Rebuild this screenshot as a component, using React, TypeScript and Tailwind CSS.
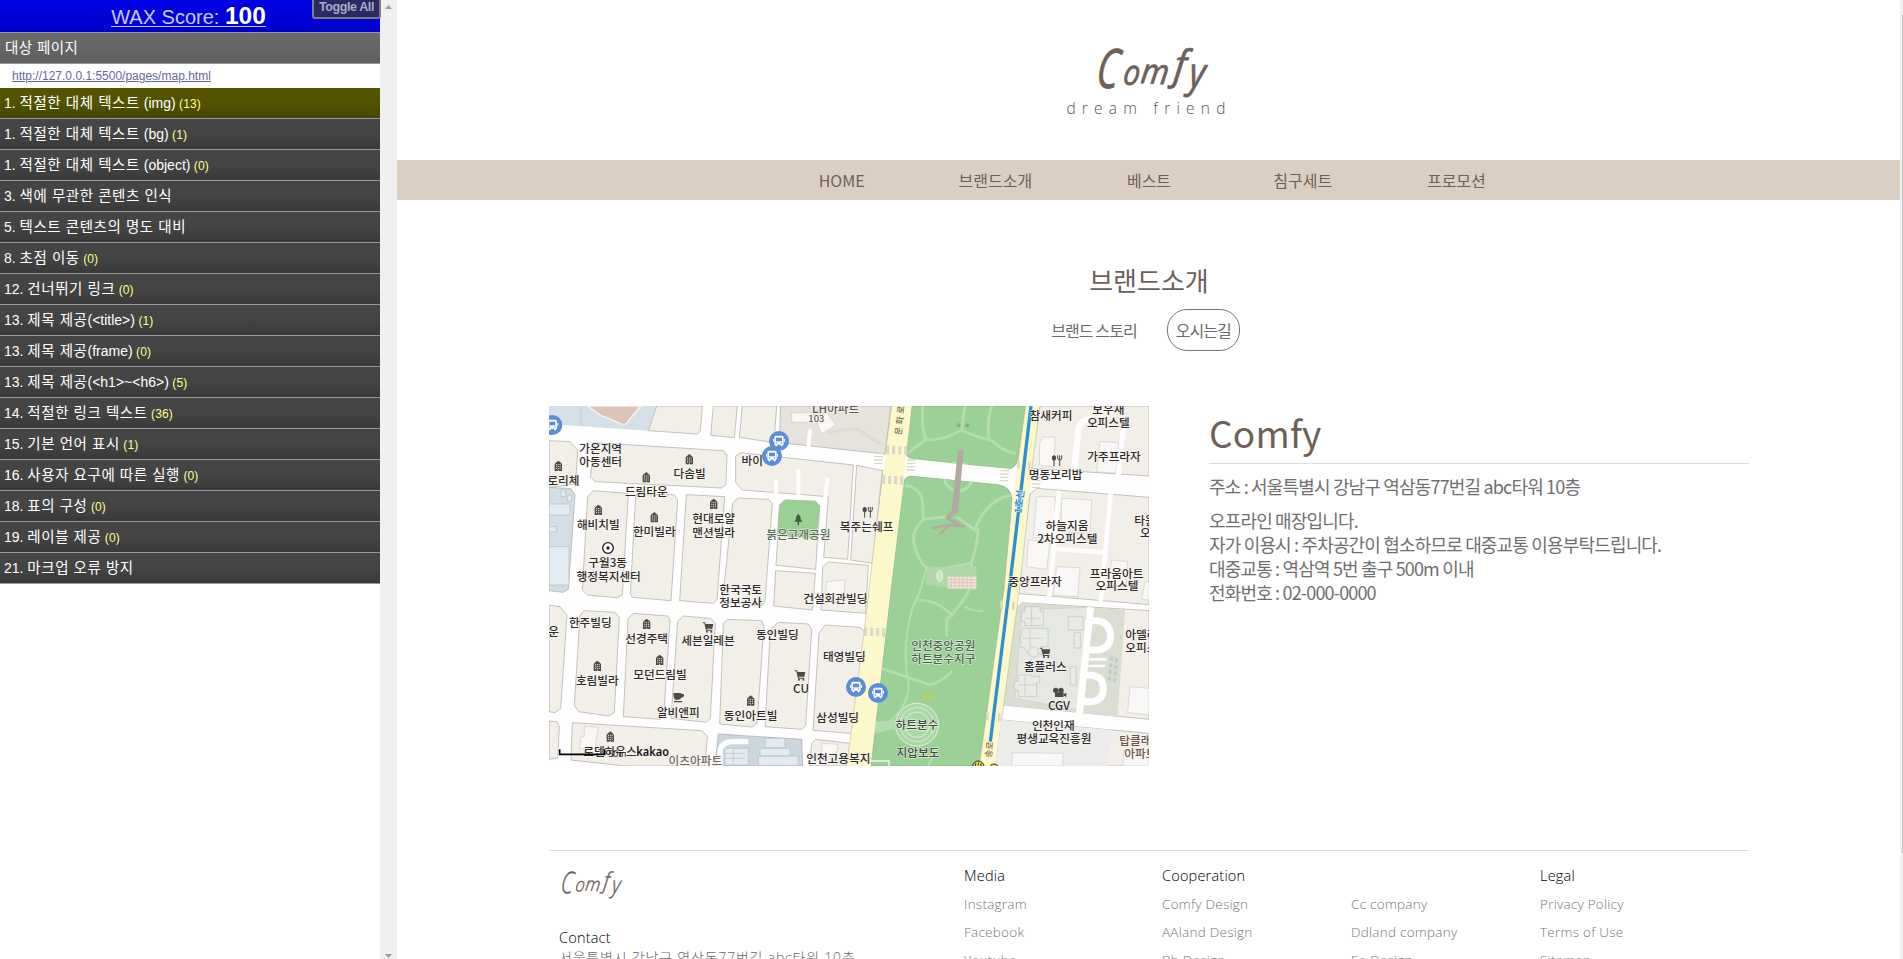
import type { ReactNode } from "react";

type Check = { no: string; ko: string; en?: string; count?: number; active?: boolean };

const checks: Check[] = [
  { no: "1.", ko: "적절한 대체 텍스트", en: " (img)", count: 13, active: true },
  { no: "1.", ko: "적절한 대체 텍스트", en: " (bg)", count: 1 },
  { no: "1.", ko: "적절한 대체 텍스트", en: " (object)", count: 0 },
  { no: "3.", ko: "색에 무관한 콘텐츠 인식" },
  { no: "5.", ko: "텍스트 콘텐츠의 명도 대비" },
  { no: "8.", ko: "초점 이동", count: 0 },
  { no: "12.", ko: "건너뛰기 링크", count: 0 },
  { no: "13.", ko: "제목 제공", en: "(<title>)", count: 1 },
  { no: "13.", ko: "제목 제공", en: "(frame)", count: 0 },
  { no: "13.", ko: "제목 제공", en: "(<h1>~<h6>)", count: 5 },
  { no: "14.", ko: "적절한 링크 텍스트", count: 36 },
  { no: "15.", ko: "기본 언어 표시", count: 1 },
  { no: "16.", ko: "사용자 요구에 따른 실행", count: 0 },
  { no: "18.", ko: "표의 구성", count: 0 },
  { no: "19.", ko: "레이블 제공", count: 0 },
  { no: "21.", ko: "마크업 오류 방지" },
];

function Sidebar() {
  return (
    <aside className="flex h-full w-[397px] shrink-0 bg-white font-['Liberation_Sans','Noto_Sans_CJK_KR',sans-serif]">
      <div className="w-[380px]">
        <div className="relative flex h-[33px] items-center justify-center border-b border-[#9a9a9a] bg-gradient-to-b from-[#0000e6] to-[#0000cc]">
          <a className="flex items-baseline pr-[3px] text-[20px] leading-none text-[#c9c9ff] underline decoration-1 underline-offset-2">
            <span className="whitespace-pre">WAX Score: </span>
            <b className="text-[24.5px] text-white">100</b>
          </a>
          <button className="absolute right-[-1px] top-[-5px] flex h-6 w-[69px] items-center justify-center rounded-[3px] border-2 border-[#7d7d86] bg-[#2a2a62] text-[12.5px] font-bold tracking-[-0.4px] text-[#a9a9c6]">
            Toggle All
          </button>
        </div>
        <div className="flex h-[31px] items-center border-b border-[#999] bg-gradient-to-b from-[#6a6a6a] to-[#606060] pl-[5px] pt-px text-[14.5px] tracking-[0.4px] text-white">
          대상 페이지
        </div>
        <div className="flex h-6 items-center pl-3 text-[12px] text-[#66669c] underline">
          <a>http://127.0.0.1:5500/pages/map.html</a>
        </div>
        {checks.map((c, i) => (
          <div
            key={i}
            className={`flex h-[31px] items-center whitespace-pre border-b border-[#999] pl-1 pt-px text-[14px] text-white ${
              c.active
                ? "bg-gradient-to-b from-[#555500] via-[#535300] to-[#454500]"
                : "bg-gradient-to-b from-[#454545] via-[#444444] to-[#393939]"
            }`}
          >
            <span>{c.no} </span>
            <span className="text-[14.5px] tracking-[0.55px]">{c.ko}</span>
            {c.en && <span>{c.en}</span>}
            {c.count !== undefined && <span className="pt-px text-[12px] tracking-[0.1px] text-[#ffff88]"> ({c.count})</span>}
          </div>
        ))}
      </div>
      <div className="flex w-[17px] flex-col items-center justify-between bg-[#f0f0f0] pb-px pt-[5px]">
        <svg width="7" height="4" viewBox="0 0 7 4"><path d="M0 4 3.5 0 7 4z" fill="#9b9b9b" /></svg>
        <svg width="7" height="4" viewBox="0 0 7 4"><path d="M0 0 3.5 4 7 0z" fill="#9b9b9b" /></svg>
      </div>
    </aside>
  );
}

/* ---------- Map ---------- */

const blocks = [
  "335,18 472,18 466,92 458,102 310,92",
  "505,18 577,18 568,113 497,106",
  "592,18 695,18 687,128 583,112",
  "12,122 75,125 98,150 92,252 12,262",
  "150,128 535,152 546,166 543,254 530,264 150,245 136,230",
  "572,168 588,158 925,195 908,478 836,472 850,290 592,270 572,248",
  "145,272 250,280 232,585 215,593 128,585 112,570 128,290",
  "272,284 388,284 398,300 378,602 262,592 256,580",
  "424,284 539,290 516,600 505,610 404,602",
  "578,294 670,298 682,310 660,603 650,617 532,606 563,310",
  "704,315 718,300 812,304 824,318 812,508 693,496",
  "692,512 811,520 803,630 686,618",
  "850,486 970,496 962,640 828,630 833,500",
  "935,196 1013,212 985,490 917,480",
  "12,615 45,620 66,645 47,925 30,938 12,935",
  "118,632 210,637 223,652 208,938 190,948 100,935 88,915 105,645",
  "265,640 368,648 375,662 356,948 345,958 235,950 249,655",
  "415,648 497,655 511,670 496,955 484,967 378,955 398,664",
  "548,658 650,662 657,678 636,970 620,981 524,972 535,670",
  "700,667 790,672 800,688 782,978 770,988 660,980 676,688",
  "840,675 945,682 960,695 925,1001 804,991 822,700",
  "12,963 35,965 43,980 38,1075 12,1078",
  "82,968 470,992 487,1008 480,1098 240,1098 78,1080",
  "812,1018 915,1030 905,1098 794,1098 800,1030",
  "1485,18 1812,18 1812,228 1460,205",
  "1455,282 1475,265 1812,292 1812,614 1415,580",
  "1412,625 1432,608 1812,632 1812,958 1377,915",
  "1370,960 1812,1000 1812,1098 1350,1098",
];

const buildings = [
  "740,38 805,38 805,50 845,38 872,75 830,102 815,68 740,66",
  "1495,110 1530,112 1528,200 1483,195 1484,130",
  "1665,125 1720,128 1713,220 1655,215",
  "1475,290 1530,290 1530,415 1465,412",
  "1550,295 1640,300 1635,400 1548,395",
  "1450,420 1515,425 1505,508 1445,500",
  "1535,500 1605,503 1598,590 1525,585",
  "1700,480 1748,485 1742,560 1690,555",
  "1800,545 1812,545 1812,600 1790,598",
  "1755,860 1812,865 1812,945 1748,938",
  "1402,1058 1555,1060 1553,1098 1400,1098",
  "1780,1055 1812,1058 1812,1098 1735,1098 1735,1052",
  "118,978 160,982 150,1045 103,1045 108,1010 118,1010",
  "832,1030 880,1033 872,1070 828,1068",
  "845,545 900,540 895,610 840,605",
];

type Label = [string, number, number, string?];

const labels: Label[] = [
  ["가온지역", 167, 160], ["아동센터", 167, 198],
  ["다솜빌", 434, 233], ["드림타운", 304, 288], ["로리체", 55, 255],
  ["해비치빌", 160, 386], ["한미빌라", 328, 408], ["현대로얄", 506, 370], ["맨션빌라", 506, 411],
  ["구월3동", 188, 500], ["행정복지센터", 191, 542],
  ["붉은고개공원", 760, 416, "#566a56"], ["바이", 622, 194],
  ["한국국토", 587, 581], ["정보공사", 587, 620], ["건설회관빌딩", 871, 609],
  ["운", 26, 708], ["한주빌딩", 136, 680], ["선경주택", 305, 729], ["세븐일레븐", 489, 735],
  ["동인빌딩", 697, 717], ["태영빌딩", 898, 783], ["호림빌라", 157, 855], ["모던드림빌", 345, 837],
  ["CU", 768, 879], ["알비앤피", 400, 951], ["동인아트빌", 617, 960], ["삼성빌딩", 878, 965],
  ["로덴하우스", 195, 1068], ["이츠아파트", 451, 1094, "#6e6862"], ["인천고용복지", 880, 1088],
  ["복주는쉐프", 965, 392],
  ["참새커피", 1518, 60], ["보우새", 1690, 42], ["오피스텔", 1690, 82], ["가주프라자", 1707, 184],
  ["명동보리밥", 1532, 238], ["하늘지움", 1566, 391], ["2차오피스텔", 1567, 430],
  ["중앙프라자", 1470, 557], ["프라움아트", 1715, 533], ["오피스텔", 1716, 570],
  ["인천중앙공원", 1195, 750, "#46644a"], ["하트분수지구", 1195, 790, "#46644a"],
  ["하트분수", 1116, 987, "#3d4a3d"], ["지압보도", 1119, 1072, "#3d4a3d"],
  ["홈플러스", 1501, 812], ["CGV", 1542, 930],
  ["인천인재", 1525, 989], ["평생교육진흥원", 1527, 1028],
];

const edgeLabels: Label[] = [
  ["타원", 1768, 374], ["오", 1785, 410], ["아델라", 1741, 716], ["오피스", 1741, 756],
  ["탑클래", 1723, 1034, "#6a5346"], ["아파트", 1738, 1074, "#6a5346"],
];

const houses: [number, number][] = [
  [40, 198], [433, 178], [304, 232], [160, 330], [328, 352], [506, 312],
  [305, 672], [344, 780], [157, 798], [617, 902], [196, 1010],
];

function House({ x, y }: { x: number; y: number }) {
  return (
    <g transform={`translate(${x - 12} ${y - 16})`}>
      <path d="M1 31V10L6 5 12 0 18 5 23 10V31Z" fill="#4d4945" />
      <path d="M5 12h3M10.500 12h3M16 12h3M5 18h3M10.500 18h3M16 18h3M5 24h3M10.500 24h3M16 24h3M10.500 30h3" stroke="#f2efe9" strokeWidth="3" />
    </g>
  );
}

function Bus({ x, y }: { x: number; y: number }) {
  return (
    <g transform={`translate(${x} ${y})`}>
      <circle r="30" fill="#5a8ddb" />
      <path d="M-10-16H10Q14-16 14-11V11H-14V-11Q-14-16-10-16ZM-11 10h6v6h-6ZM5 10h6v6h-6ZM-18-6h3v8h-3ZM15-6h3v8h-3Z" fill="#fff" />
      <path d="M-9-10H9V1H-9Z" fill="#5a8ddb" />
      <circle cx="-8" cy="6" r="2" fill="#5a8ddb" />
      <circle cx="8" cy="6" r="2" fill="#5a8ddb" />
    </g>
  );
}

function Cart({ x, y }: { x: number; y: number }) {
  return (
    <g transform={`translate(${x - 16} ${y - 15})`} fill="#4d4945">
      <path d="M0 0h7l2 5h23l-3 14H12l1 3h16v3H10L5 3H0Z" />
      <circle cx="13" cy="28" r="3" />
      <circle cx="26" cy="28" r="3" />
    </g>
  );
}

function Fork({ x, y }: { x: number; y: number }) {
  return (
    <g transform={`translate(${x - 16} ${y - 16})`} fill="none" stroke="#4d4945" strokeWidth="3">
      <ellipse cx="7" cy="8" rx="5" ry="7" fill="#4d4945" />
      <path d="M7 14V32M24 14V32M18 0V8Q18 14 24 14T30 8V0M24 0V14" />
    </g>
  );
}

function Crosswalk({ x, y, vertical = false }: { x: number; y: number; vertical?: boolean }) {
  return (
    <path
      d={vertical ? "M0 0V25M18 1V26M36 2V27M54 3V28" : "M0 0h25M-1 10h25M-2 20h25M-3 30h25"}
      transform={`translate(${x} ${y})`}
      stroke="#d9d6ca"
      strokeWidth={vertical ? 9 : 4}
      fill="none"
    />
  );
}

function MapText({ items }: { items: Label[] }) {
  return (
    <>
      {items.map(([text, x, y, fill], i) => (
        <text key={i} x={x} y={y} fill={fill ?? "#2e2b28"}>{text}</text>
      ))}
    </>
  );
}

function BrandMap() {
  return (
    <svg className="block h-[360px] w-[600px]" viewBox="12 18 1800 1080">
      <rect x="12" y="18" width="1800" height="1080" fill="#fefefe" />
      <polygon points="12,18 335,18 310,92 12,72" fill="#d5dfe7" />
      <path d="M108 18V78" stroke="#b9c4cc" strokeWidth="2" />
      <path d="M128 18 165 45 234 74 243 72 287 18Z" fill="#dcc3b5" stroke="#f7efe9" strokeWidth="5" />
      <g fill="#f2efe9" stroke="#a9a6a2" strokeWidth="2" strokeLinejoin="round">
        {blocks.map((p) => <polygon key={p} points={p} />)}
        <polygon points="706,18 1038,18 1020,162 704,128" fill="#e6e3dd" />
        <polygon points="12,262 78,266 90,285 70,568 55,577 12,572" fill="#d3dde4" />
        <polygon points="520,1002 770,1018 773,1098 510,1098" fill="#ccd6dd" />
        <polygon points="1412,625 1432,608 1740,630 1718,950 1377,915" fill="#d9ddd2" stroke="none" />
        <polygon points="1370,960 1700,990 1690,1098 1350,1098" fill="#ececea" stroke="none" />
      </g>
      <g fill="#e2ebf1" stroke="#b3bec6" strokeWidth="2">
        <path d="M12 312H75V345H12ZM12 380H34V396H12ZM12 440H72V555H12ZM48 270h14v20H48ZM68 286h12v18H68Z" />
        <path d="M540 1045h70v50h-70ZM660 1015h60v28h-60ZM645 1045h90v23h-90ZM640 1068h120v28H640ZM540 1060h60M540 1075h60M565 1045v50" />
      </g>
      <path d="M610 1025H560Q525 1028 525 1060V1098" fill="none" stroke="#fff" strokeWidth="16" />
      <polygon points="722,300 812,304 824,318 814,414 697,407 704,315" fill="#9bd094" stroke="#a3bfa0" strokeWidth="2" />
      <g fill="#f9f8f6" stroke="#cfccc7" strokeWidth="2">
        {buildings.map((p) => <polygon key={p} points={p} />)}
      </g>
      <path d="M850 100Q890 85 940 88L1005 130" stroke="#dedbd5" strokeWidth="10" fill="none" />
      <g stroke="#fefefe" fill="none" strokeWidth="12">
        <path d="M795 88 790 140M693 240V290M760 208V290M847 234 840 300" />
        <path d="M1640 58Q1605 58 1600 90L1587 212" strokeWidth="19" />
        <path d="M1738 60 1720 225" strokeWidth="15" />
        <path d="M1542 272 1513 590M1697 280 1667 605M1530 447 1680 457" strokeWidth="14" />
      </g>

      {/* park */}
      <g fill="#9bd096" stroke="#8aa888" strokeWidth="2">
        <path d="M1100 18H1442L1420 170Q1415 208 1385 207L1100 175Q1082 173 1084 155Z" />
        <path d="M1076 248Q1080 226 1105 228L1360 254Q1405 262 1401 310L1377 570 1303 1098H977L1037 570Z" />
      </g>
      <g fill="none" stroke="#b4dcae" strokeWidth="9">
        <path d="M1133 18Q1130 90 1142 118L1088 160M1142 118Q1190 125 1250 90L1260 18M1250 90Q1290 110 1340 122 1370 150 1412 162M1340 18Q1325 60 1332 120" />
        <path d="M1080 255Q1125 265 1132 300L1135 358Q1105 385 1105 420 1115 480 1150 510M1135 358 1205 350M1235 350 1290 390Q1320 300 1400 285M1300 385Q1295 450 1278 490L1145 515M1280 490V550Q1270 590 1205 660L1205 710M1222 812Q1200 840 1155 855L1010 805" />
        <path d="M1145 500Q1130 570 1100 630 1070 750 1090 850 1095 900 1050 950L1010 985M1120 600Q1180 600 1225 650M1260 620Q1280 635 1315 632M1150 1098 1175 1040" strokeWidth="7" />
      </g>
      <circle cx="1240" cy="230" r="42" fill="none" stroke="#b4dcae" strokeWidth="10" />
      <path d="M1078 201 1405 232" stroke="#fefefe" strokeWidth="48" />
      <path d="M1246 150 1232 335 1208 355 1230 368M1162 385 1210 375 1260 378M1185 402 1215 375 1250 378 1205 352 1220 335" stroke="#b5a8a3" strokeWidth="7" fill="none" />
      <path d="M1239 150h17l-17 190h-20Z" fill="#b5a8a3" />
      <path d="M1150 500 1295 500 1293 570 1140 555Z" fill="#b0d7a8" />
      <rect x="1208" y="530" width="86" height="36" fill="#eee4dc" />
      <path d="M1208 539h86M1208 548h86M1208 557h86M1218 530v36M1230 530v36M1242 530v36M1254 530v36M1266 530v36M1278 530v36" stroke="#dcb5af" strokeWidth="2" />
      <ellipse cx="1184" cy="528" rx="9" ry="17" fill="#cce7c3" stroke="#f0f7ec" strokeWidth="2" />
      <path d="M1128 888Q1140 865 1155 872L1177 890 1160 905 1130 905Z" fill="#a9d27c" />
      <circle cx="1116" cy="974" r="67" fill="#acd8a7" />
      <g fill="none" stroke="#dceeda" strokeWidth="3">
        <circle cx="1116" cy="974" r="64" />
        <circle cx="1116" cy="974" r="51" />
        <circle cx="1116" cy="974" r="38" />
      </g>
      <path d="M990 965 1050 960 1055 985 990 1000Z" fill="#b4dcae" />
      <circle cx="1241" cy="76" r="6" fill="#78b378" />
      <circle cx="1267" cy="76" r="6" fill="#78b378" />
      <path d="M977 1083h55v15" stroke="#dfe9db" strokeWidth="6" fill="none" />

      {/* main roads */}
      <polygon points="1040,18 1100,18 1084,160 1076,250 1037,570 977,1098 905,1098 958,690 972,570 1012,250" fill="#fdf8c9" />
      <path d="M1040 18 1020 165M1012 212 972 570 958 690 905 1098" stroke="#c5c0a0" strokeWidth="2" fill="none" />
      <polygon points="1442,18 1485,18 1455,270 1423,570 1350,1098 1303,1098 1377,570 1405,280" fill="#fdf8c9" />
      <path d="M1485 18 1460 210M1455 280 1423 570 1370 960M1442 18 1420 180M1401 290 1377 570 1303 1098" stroke="#c5c0a0" strokeWidth="2" fill="none" />
      <path d="M1458 18 1395 550 1336 1025" stroke="#2f8fd3" strokeWidth="10" fill="none" />
      <Crosswalk x={1028} y={136} vertical />
      <Crosswalk x={1016} y={226} vertical />
      <Crosswalk x={962} y={682} vertical />
      <Crosswalk x={990} y={160} />
      <Crosswalk x={1087} y={180} />
      <Crosswalk x={1367} y={212} />
      <Crosswalk x={1463} y={232} />
      <path d="M1420 180v25M1453 185v25M1370 602v25M1405 605v25M1327 935v25M1363 940v25" stroke="#dedac0" strokeWidth="8" />

      {/* department store and parking loops */}
      <polygon points="1430,630 1628,622 1600,930 1410,895" fill="#e5e8e3" stroke="#cacfc5" strokeWidth="2" />
      <g fill="#e9ebe7" stroke="#bfc3bc" strokeWidth="2">
        <path d="M1440 620h45v15h10v42h-55v-12h-10v-30h10ZM1433 685h76v55h-20v22h-40l-12-20h-10v-30ZM1420 825h40v5h24v18h-9v42h-55v-20h-12v-25h12ZM1570 650h44v40h-44ZM1588 698h18v46h-18ZM1576 800h18v55h-18Z" />
        <path d="M1460 620v55M1440 655h45M1455 690v55M1433 715h60M1440 830v55M1420 855h54" fill="none" />
        <circle cx="1466" cy="756" r="15" />
      </g>
      <g fill="none" stroke="#fefefe" strokeWidth="21">
        <path d="M1637 622 1602 955" />
        <path d="M1632 662H1655Q1695 665 1697 710 1695 745 1660 750H1625" />
        <path d="M1615 826H1640Q1675 830 1675 865 1675 902 1640 905H1608" />
        <path d="M1627 662V750M1612 826V905" strokeWidth="14" />
        <path d="M1630 778H1685M1630 798H1680" strokeWidth="8" />
      </g>
      <path d="M1700 770 1692 850M1715 775 1708 850" stroke="#c6cbc7" strokeWidth="10" strokeDasharray="12 8" />

      {houses.map(([x, y]) => <House key={`${x}-${y}`} x={x} y={y} />)}
      <Cart x={489} y={682} />
      <Cart x={765} y={826} />
      <Cart x={1500} y={758} />
      <Fork x={968} y={337} />
      <Fork x={1536} y={182} />
      <path d="M385 879h24v3h7q4 10-7 11-4 6-9 6h-9q-6-4-6-20ZM387 903h24v4h-24Z" fill="#4d4945" />
      <path d="M760 341 769 355h-4l7 10h-10v11h-4v-11h-10l7-10h-4Z" fill="#3c5a3c" />
      <circle cx="189" cy="444" r="16" fill="#fff" stroke="#222" strokeWidth="4" />
      <circle cx="189" cy="444" r="5" fill="#222" />
      <g fill="#4d4945">
        <circle cx="1532" cy="871" r="8" /><circle cx="1548" cy="871" r="8" />
        <path d="M1530 877h26v14h-26ZM1557 882l7-4v13l-7-4Z" />
      </g>

      <g
        className="font-['Noto_Sans_CJK_KR',sans-serif] font-medium"
        fontSize="35"
        textAnchor="middle"
        stroke="#fbfaf7"
        strokeOpacity="0.7"
        strokeWidth="4"
        strokeLinejoin="round"
        paintOrder="stroke"
      >
        <MapText items={labels} />
        <g textAnchor="start"><MapText items={edgeLabels} /></g>
        <text x="872" y="38" fill="#5c5650">LH아파트</text>
        <text x="814" y="65" fontSize="28" fill="#5c5650">103</text>
        <text transform="translate(1074 58) rotate(-84)" fontSize="26" fill="#6e6a55" stroke="none" letterSpacing="8">문화로</text>
        <text transform="translate(1433 306) rotate(-83)" fontSize="29" fontWeight="700" fill="#2f8fd3">1호선</text>
        <text transform="translate(1342 1050) rotate(-83)" fontSize="26" fill="#77735c" stroke="none">송로</text>
      </g>
      <Bus x={22} y={75} />
      <Bus x={681} y={168} />
      <Bus x={702} y={123} />
      <Bus x={933} y={861} />
      <Bus x={999} y={879} />
      <g stroke="#222" strokeWidth="3">
        <circle cx="1300" cy="1100" r="17" fill="#f6df54" />
        <circle cx="1347" cy="1106" r="14" fill="#f6df54" />
      </g>
      <path d="M1292 1090v8M1300 1088v8M1308 1090v8" stroke="#222" strokeWidth="3" />
      <path d="M44 1048V1063H179V1048" fill="none" stroke="#000" strokeWidth="5" />
      <text x="190" y="1072" fontSize="26" className="font-['Noto_Sans']" fill="#222">50m</text>
      <text x="274" y="1069" fontSize="35" className="font-['Noto_Sans'] font-semibold" fill="#111" textLength="98" lengthAdjust="spacingAndGlyphs">kakao</text>
    </svg>
  );
}

/* ---------- Site ---------- */

type Letter = { ch: string; size: number; sx: number; at: string };

const wordmark: Letter[] = [
  { ch: "C", size: 55, sx: 0.68, at: "translate(-2 40) rotate(4)" },
  { ch: "o", size: 36, sx: 0.8, at: "translate(25 37) rotate(6)" },
  { ch: "m", size: 35, sx: 0.9, at: "translate(43 36) rotate(3)" },
  { ch: "f", size: 41, sx: 0.92, at: "translate(76 32) rotate(2)" },
  { ch: "y", size: 42, sx: 0.82, at: "translate(91 40) rotate(2)" },
];

function Wordmark({ className }: { className: string }) {
  return (
    <svg className={className} viewBox="0 0 112 54" overflow="visible" role="img" aria-label="Comfy">
      <g className="font-['Open_Sans',cursive] italic" fill="#6e6059" stroke="#6e6059" strokeWidth="0.8" strokeLinejoin="round">
        {wordmark.map((l) => (
          <text key={l.ch} fontSize={l.size} transform={`${l.at} scale(${l.sx} 1) skewX(-5)`}>{l.ch}</text>
        ))}
      </g>
    </svg>
  );
}

const navItems = ["HOME", "브랜드소개", "베스트", "침구세트", "프로모션"];

function FooterColumn({ title, items, width }: { title: string; items: string[]; width: string }) {
  return (
    <div className={`shrink-0 ${width}`}>
      <h3 className="h-[25px] pt-px text-[14.5px] leading-[20px] tracking-[0.2px] text-black">{title}</h3>
      <ul className="text-[13.5px] leading-[28px] tracking-[0.25px] text-[#767676]">
        {items.map((t) => <li key={t}>{t}</li>)}
      </ul>
    </div>
  );
}

function Line({ children }: { children: ReactNode }) {
  return <p className="leading-6">{children}</p>;
}

export default function App() {
  return (
    <div className="flex h-[959px] w-[1903px] overflow-hidden bg-white">
      <Sidebar />
      <main className="flex h-full w-[1503px] shrink-0 flex-col items-center overflow-hidden pl-px font-['Noto_Sans_CJK_KR',sans-serif]">
        <header className="flex h-[160px] w-full shrink-0 flex-col items-center pt-[47px]">
          <Wordmark className="ml-[7px] h-[54px] w-[112px]" />
          <p className="-mt-[5px] font-['Open_Sans',sans-serif] text-[15.5px] font-light leading-6 tracking-[6.2px] text-[#555]">dream friend</p>
        </header>
        <nav className="-ml-px flex h-10 w-[1503px] shrink-0 items-center justify-center bg-[#dbcfc3] pl-px text-[16px] text-[#6e5f57]">
          {navItems.map((n) => <a key={n} className="w-[153.7px] text-center">{n}</a>)}
        </nav>

        <section className="flex shrink-0 flex-col items-center pt-[61px]">
          <h1 className="text-[26px] leading-[38px] text-[#6b5f59]">브랜드소개</h1>
          <div className="mt-[10px] flex items-center gap-[30px] pr-[7px] text-[16px] tracking-[-0.9px] text-[#6b6b6b]">
            <a>브랜드 스토리</a>
            <a className="flex h-[42px] w-[73px] items-center justify-center rounded-[20px] border border-[#777]">오시는길</a>
          </div>
        </section>

        <section className="mt-[55px] flex w-[1200px] shrink-0 justify-between">
          <BrandMap />
          <div className="w-[540px] text-[18px] tracking-[-0.83px] text-[#6f6f6f]">
            <h2 className="h-[58px] border-b border-[#ddd] text-[37px] leading-[52px] tracking-[0.2px] text-[#6e5f57]">Comfy</h2>
            <p className="mb-[10px] mt-[10px] leading-6">주소 : 서울특별시 강남구 역삼동77번길 abc타워 10층</p>
            <Line>오프라인 매장입니다.</Line>
            <Line>자가 이용시 : 주차공간이 협소하므로 대중교통 이용부탁드립니다.</Line>
            <Line>대중교통 : 역삼역 5번 출구 500m 이내</Line>
            <Line>전화번호 : 02-000-0000</Line>
          </div>
        </section>

        <footer className="mt-[84px] flex h-[200px] w-[1200px] shrink-0 border-t border-[#ddd] pt-[14px] font-['Open_Sans','Noto_Sans_CJK_KR',sans-serif] font-light">
          <div className="w-[415px] shrink-0 pl-[10px] pt-[5px]">
            <Wordmark className="ml-0.5 h-[31px] w-[62px]" />
            <h3 className="mt-[26px] text-[14.5px] leading-[22px] tracking-[0.2px] text-black">Contact</h3>
            <p className="-mt-px text-[14px] leading-5 tracking-[0.8px] text-[#666]">서울특별시 강남구 역삼동77번길 abc타워 10층</p>
          </div>
          <FooterColumn title="Media" items={["Instagram", "Facebook", "Youtube"]} width="w-[198px]" />
          <FooterColumn title="Cooperation" items={["Comfy Design", "AAland Design", "Bb Design"]} width="w-[189px]" />
          <FooterColumn title="" items={["Cc company", "Ddland company", "Ee Design"]} width="w-[189px]" />
          <FooterColumn title="Legal" items={["Privacy Policy", "Terms of Use", "Sitemap"]} width="w-[120px]" />
        </footer>
      </main>
      <div className="flex h-full w-[3px] shrink-0 justify-end bg-[#f1f1f1] pt-[15px]">
        <div className="h-[838px] w-px bg-[#bdbdbd]" />
      </div>
    </div>
  );
}
